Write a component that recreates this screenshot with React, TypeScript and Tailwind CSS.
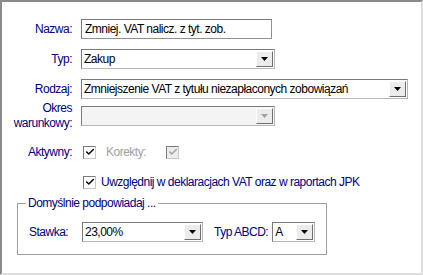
import { Check } from 'lucide-react';

const font = { fontFamily: '"Liberation Sans", Arial, sans-serif' };

function Arrow({ disabled = false }: { disabled?: boolean }) {
  return (
    <div className="w-[17px] h-[16px] bg-[#ececec] border border-t-white border-l-white border-r-[#6f6f6f] border-b-[#6f6f6f] flex items-center justify-center shrink-0">
      <svg width="7" height="4" viewBox="0 0 7 4">
        <path d="M0 0h7L3.5 4z" fill={disabled ? '#a0a0a0' : '#000'} />
      </svg>
    </div>
  );
}

function Combo({ value, w, disabled = false }: { value: string; w: string; disabled?: boolean }) {
  return (
    <div className={`${w} h-[20px] flex items-center justify-between border border-t-[#7a7a7a] border-l-[#7a7a7a] border-r-[#b8b8b8] border-b-[#b8b8b8] pl-[2px] pr-[1px] ${disabled ? 'bg-[#f4f4f4]' : 'bg-white'}`}>
      <span className="text-black leading-none whitespace-nowrap">{value}</span>
      <Arrow disabled={disabled} />
    </div>
  );
}

function Box({ disabled = false }: { disabled?: boolean }) {
  return (
    <div className={`w-[13px] h-[13px] border border-t-[#7a7a7a] border-l-[#7a7a7a] border-r-[#c8c8c8] border-b-[#c8c8c8] flex items-center justify-center ${disabled ? 'bg-[#ececec]' : 'bg-white'}`}>
      <Check size={10} strokeWidth={3.5} color={disabled ? '#a0a0a0' : '#000'} />
    </div>
  );
}

export default function App() {
  return (
    <div style={font} className="w-[423px] h-[275px] bg-white text-[12px] tracking-[-0.5px] text-[#000080] border-t-2 border-l-2 border-r-2 border-b-2 border-t-[#8a8a8a] border-l-[#8a8a8a] border-r-[#dedede] border-b-[#dedede] pt-[17px]">
      <div className="flex items-center h-[20px]">
        <div className="w-[70px] text-right">Nazwa:</div>
        <div className="ml-[9px] w-[191px] h-[20px] flex items-center border border-t-[#7a7a7a] border-l-[#7a7a7a] border-r-[#909090] border-b-[#909090] pl-[3px] text-black whitespace-nowrap">
          Zmniej. VAT nalicz. z tyt. zob.
        </div>
      </div>
      <div className="flex items-center mt-[10px]">
        <div className="w-[70px] text-right">Typ:</div>
        <div className="ml-[9px]">
          <Combo value="Zakup" w="w-[194px]" />
        </div>
      </div>
      <div className="flex items-center mt-[10px]">
        <div className="w-[70px] text-right">Rodzaj:</div>
        <div className="ml-[9px]">
          <Combo value="Zmniejszenie VAT z tytułu niezapłaconych zobowiązań" w="w-[327px]" />
        </div>
      </div>
      <div className="flex items-center mt-[2px]">
        <div className="w-[70px] text-right leading-[15px]">
          Okres
          <br />
          warunkowy:
        </div>
        <div className="ml-[9px]">
          <Combo value="" w="w-[194px]" disabled />
        </div>
      </div>
      <div className="flex items-center mt-[14px] h-[14px]">
        <div className="w-[70px] text-right">Aktywny:</div>
        <div className="ml-[11px]">
          <Box />
        </div>
        <div className="ml-[10px] text-[#a0a0a0]">Korekty:</div>
        <div className="ml-[20px]">
          <Box disabled />
        </div>
      </div>
      <div className="flex items-center mt-[16px] h-[14px] pl-[81px]">
        <Box />
        <div className="ml-[5px] whitespace-nowrap">Uwzględnij w deklaracjach VAT oraz w raportach JPK</div>
      </div>
      <fieldset className="ml-[15px] mt-[7px] w-[310px] h-[59px] border border-[#a0a0a0] px-[11px]">
        <legend className="px-[2px] ml-[-3px] leading-[14px]">Domyślnie podpowiadaj ...</legend>
        <div className="flex items-center mt-[12px]">
          <div className="w-[53px]">Stawka:</div>
          <Combo value="23,00%" w="w-[121px]" />
          <div className="ml-[11px] whitespace-nowrap">Typ ABCD:</div>
          <div className="ml-[4px]">
            <Combo value="A" w="w-[43px]" />
          </div>
        </div>
      </fieldset>
    </div>
  );
}
